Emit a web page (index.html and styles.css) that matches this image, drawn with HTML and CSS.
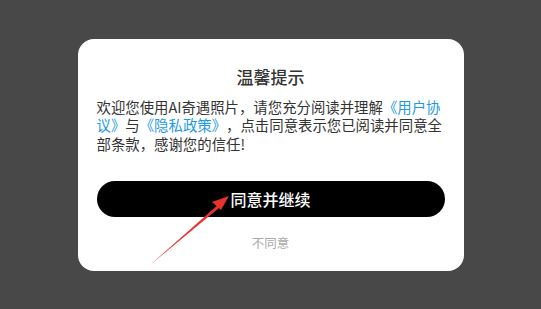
FILE: index.html
```html
<!DOCTYPE html>
<html lang="zh-CN">
<head>
    <meta charset="UTF-8">
    <meta name="viewport" content="width=device-width, initial-scale=1.0">
    <title>温馨提示</title>
    <link rel="stylesheet" href="styles.css">
</head>
<body>
    <div class="dialog">
        <h2 class="title">温馨提示</h2>
        <p class="content">欢迎您使用AI奇遇照片，请您充分阅读并理解<a href="#">《用户协议》</a>与<a href="#">《隐私政策》</a>，点击同意表示您已阅读并同意全部条款，感谢您的信任!</p>
        <button class="agree">同意并继续</button>
        <button class="disagree">不同意</button>
    </div>

    <!-- annotation arrow -->
    <svg class="arrow" width="541" height="309" viewBox="0 0 541 309">
        <path d="M150 265 L220 203 L222 205.5 Z" fill="#e8322c"/>
        <path d="M229 196 L212 202 L221 210 Z" fill="#e8322c"/>
    </svg>
</body>
</html>
```

FILE: styles.css
```css
body {
    margin: 0;
    background: #484848;
    font-family: "Noto Sans CJK SC", "Noto Sans", sans-serif;
    color: #333;
    min-height: 100vh;
    display: flex;
    align-items: center;
    justify-content: center;
}
.dialog {
    width: 386px;
    height: 232px;
    box-sizing: border-box;
    background: #fff;
    border-radius: 16px;
    padding: 26px 19px 0;
    display: flex;
    flex-direction: column;
    align-items: center;
}
.title {
    margin: 0;
    font-size: 17px;
    font-weight: 500;
    line-height: 24px;
    color: #333;
}
.content {
    margin: 9px 0 0;
    font-size: 14.4px;
    line-height: 18.5px;
    color: #333;
    width: 348px;
    text-spacing-trim: space-all;
}
.content a {
    color: #1e9ae0;
    text-decoration: none;
}
.agree {
    margin-top: 28px;
    width: 348px;
    height: 36px;
    border: none;
    border-radius: 18px;
    background: #000;
    color: #fff;
    font-family: inherit;
    font-size: 16px;
    font-weight: 500;
}
.disagree {
    margin-top: 16px;
    border: none;
    background: none;
    padding: 0;
    font-family: inherit;
    font-size: 12.5px;
    color: #aaa;
}
.arrow {
    position: absolute;
    left: 0;
    top: 0;
}
```
